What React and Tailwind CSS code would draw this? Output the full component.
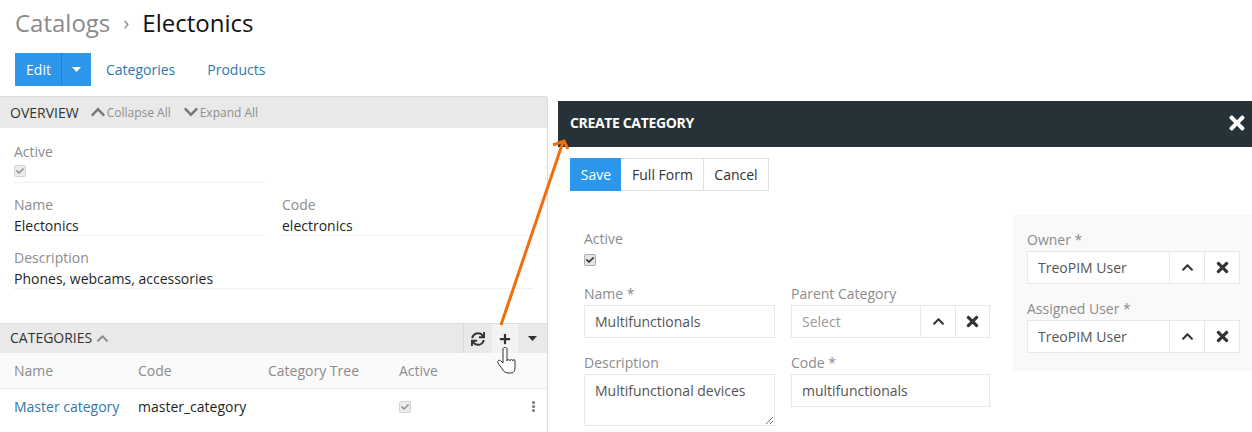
import React from 'react';
import { FaCheck, FaChevronUp, FaChevronDown, FaTimes, FaSync, FaPlus } from 'react-icons/fa';

const Caret = ({ className }) => (
    <svg width="9" height="5" viewBox="0 0 9 5" className={className}><path d="M0 0h9L4.5 5z" fill="currentColor" /></svg>
);

const ReadBox = ({ dark }) => (
    <span className={`flex h-[12px] w-[12px] items-center justify-center rounded-[2px] border ${dark ? 'border-[#aaa] bg-[#e4e4e4] text-[#222]' : 'border-[#d4d4d4] bg-[#ececec] text-[#8f8f8f]'}`}>
        <FaCheck size={8} />
    </span>
);

const Detail = ({ label, value, width }) => (
    <div className={width}>
        <div className="h-[21px] text-[14px] leading-[21px] text-[#8c8c8c]">{label}</div>
        <div className="h-[21px] border-b border-[#f0f0f0] text-[14px] leading-[21px] text-[#1f1f1f]">{value}</div>
    </div>
);

const Field = ({ label, children, width }) => (
    <div className={width}>
        <div className="h-[22px] text-[14px] leading-[21px] text-[#8c8c8c]">{label}</div>
        {children}
    </div>
);

const Input = ({ value }) => (
    <div className="h-[33px] border border-[#e8e8e8] bg-white px-[10px] text-[14px] leading-[31px] text-[#555]">{value}</div>
);

const LinkInput = ({ value, muted, inputWidth }) => (
    <div className="flex h-[33px] border border-[#e8e8e8] bg-white text-[#333]">
        <div className={`${inputWidth} px-[10px] text-[14px] leading-[31px] ${muted ? 'text-[#999]' : 'text-[#555]'}`}>{value}</div>
        <div className="flex w-[35px] items-center justify-center border-l border-[#e8e8e8]"><FaChevronUp size={13} /></div>
        <div className="flex flex-1 items-center justify-center border-l border-[#e8e8e8]"><FaTimes size={17} /></div>
    </div>
);

const App = () => {
    return (
        <div className="relative flex h-[432px] w-[1252px] overflow-hidden bg-white font-['Open_Sans',sans-serif]">
            <div className="w-[548px] shrink-0">
                <div className="flex h-[46px] items-center pl-[15px] text-[24px] leading-[46px]">
                    <span className="text-[#8a8a8a]">Catalogs</span>
                    <span className="ml-[13px] mr-[13px] text-[20px] text-[#8a8a8a]">›</span>
                    <span className="text-[#111]">Electonics</span>
                </div>
                <div className="mt-[7px] flex h-[33px] items-center pl-[15px] text-[14px]">
                    <div className="flex h-[33px] w-[46px] items-center justify-center bg-[#2b96ea] pl-[1px] text-white">Edit</div>
                    <div className="flex h-[33px] w-[30px] items-center justify-center border-l border-[#2280c9] bg-[#2b96ea] text-white"><Caret /></div>
                    <span className="ml-[15px] text-[#2f78ae]">Categories</span>
                    <span className="ml-[32px] text-[#2f78ae]">Products</span>
                </div>
                <div className="mt-[10px] h-[336px] rounded-tr-[3px] border-t border-r border-[#dcdcdc]">
                    <div className="flex h-[31px] items-center bg-[#e9e9e9] pl-[10px] text-[14px] text-[#333]">
                        <span>OVERVIEW</span>
                        <span className="ml-[11px] flex items-center text-[12px] text-[#8f8f8f]">
                            <FaChevronUp size={16} className="mr-[1px] -translate-y-[1px] text-[#777]" />Collapse All
                        </span>
                        <span className="ml-[12px] flex items-center text-[12px] text-[#8f8f8f]">
                            <FaChevronDown size={16} className="mr-[1px] -translate-y-[1px] text-[#777]" />Expand All
                        </span>
                    </div>
                    <div className="h-[195px] px-[14px] pt-[13px]">
                        <div className="h-[42px] w-[251px] border-b border-[#f0f0f0]">
                            <div className="h-[21px] text-[14px] leading-[21px] text-[#8c8c8c]">Active</div>
                            <div className="mt-[3px]"><ReadBox /></div>
                        </div>
                        <div className="mt-[11px] flex gap-[17px]">
                            <Detail label="Name" value="Electonics" width="w-[251px]" />
                            <Detail label="Code" value="electronics" width="w-[251px]" />
                        </div>
                        <div className="mt-[11px]">
                            <Detail label="Description" value="Phones, webcams, accessories" />
                        </div>
                    </div>
                    <div className="flex h-[30px] items-center border-t border-[#dcdcdc] bg-[#e9e9e9] pl-[10px] text-[14px] text-[#333]">
                        <span className="-translate-y-[1px]">CATEGORIES</span>
                        <FaChevronUp size={13} className="ml-[4px] text-[#8f8f8f]" />
                        <div className="ml-auto flex h-full">
                            <div className="flex w-[29px] items-center justify-center border-l border-[#d8d8d8] text-[#333]"><FaSync size={14} /></div>
                            <div className="flex w-[26px] items-center justify-center bg-[#f3f3f3] text-[#333]"><FaPlus size={12} /></div>
                            <div className="flex w-[29px] items-center justify-center text-[#333]"><Caret /></div>
                        </div>
                    </div>
                    <div className="flex h-[36px] items-center border-b border-[#e8e8e8] bg-[#fafafa] text-[14px] text-[#8c8c8c]">
                        <span className="w-[138px] pl-[14px]">Name</span>
                        <span className="w-[130px]">Code</span>
                        <span className="w-[131px]">Category Tree</span>
                        <span>Active</span>
                    </div>
                    <div className="flex h-[35px] items-center text-[14px]">
                        <span className="w-[138px] pl-[14px] text-[#2f78ae]">Master category</span>
                        <span className="w-[261px] text-[#1f1f1f]">master_category</span>
                        <ReadBox />
                        {/* row menu dots */}
                        <span className="ml-[121px] flex w-[3px] flex-col gap-[1px]">
                            <span className="h-[3px] w-[3px] rounded-full bg-[#777]" />
                            <span className="h-[3px] w-[3px] rounded-full bg-[#777]" />
                            <span className="h-[3px] w-[3px] rounded-full bg-[#777]" />
                        </span>
                    </div>
                </div>
            </div>

            <div className="ml-[10px] flex-1 pt-[101px]">
                <div className="flex h-[46px] items-center justify-between bg-[#263238] pl-[12px] pr-[4px] text-white">
                    <span className="-translate-y-[2px] text-[14px] font-bold tracking-[-0.35px]">CREATE CATEGORY</span>
                    <FaTimes size={22} className="-translate-y-[1px]" />
                </div>
                <div className="ml-[12px] mt-[11px] flex h-[33px] text-[14px]">
                    <div className="flex w-[51px] items-center justify-center bg-[#2b96ea] pl-[1px] text-white">Save</div>
                    <div className="flex w-[83px] items-center justify-center border-y border-r border-[#e0e0e0] pl-[1px] text-[#333]">Full Form</div>
                    <div className="flex w-[65px] items-center justify-center border-y border-r border-[#e0e0e0] text-[#333]">Cancel</div>
                </div>
                <div className="mt-[24px] flex">
                    <div className="ml-[26px] w-[406px] pt-[13px]">
                        <div className="h-[21px] text-[14px] leading-[21px] text-[#8c8c8c]">Active</div>
                        <div className="mt-[5px] h-[29px]"><ReadBox dark /></div>
                        <div className="flex gap-[16px]">
                            <Field label="Name *" width="w-[191px]"><Input value="Multifunctionals" /></Field>
                            <Field label="Parent Category" width="w-[199px]"><LinkInput value="Select" muted inputWidth="w-[128px]" /></Field>
                        </div>
                        <div className="mt-[14px] flex gap-[16px]">
                            <Field label="Description" width="w-[191px]">
                                <div className="relative h-[52px] border border-[#e8e8e8] bg-white px-[10px] pt-[5px] text-[14px] leading-[21px] text-[#555]">
                                    Multifunctional devices
                                    <svg width="8" height="8" viewBox="0 0 8 8" className="absolute bottom-[1px] right-[1px] text-[#777]"><path d="M1 8 8 1M5 8l3-3" stroke="currentColor" /></svg>
                                </div>
                            </Field>
                            <Field label="Code *" width="w-[199px]"><Input value="multifunctionals" /></Field>
                        </div>
                    </div>
                    <div className="ml-[23px] h-[156px] flex-1 bg-[#f9f9f9] pl-[14px] pr-[12px] pt-[14px]">
                        <Field label="Owner *"><LinkInput value="TreoPIM User" inputWidth="w-[141px]" /></Field>
                        <div className="mt-[14px]">
                            <Field label="Assigned User *"><LinkInput value="TreoPIM User" inputWidth="w-[141px]" /></Field>
                        </div>
                    </div>
                </div>
            </div>

            {/* annotation arrow and mouse pointer */}
            <svg width="1252" height="432" viewBox="0 0 1252 432" className="pointer-events-none absolute left-0 top-0">
                <path d="M501 325 563 142" stroke="#f26d0c" strokeWidth="3" fill="none" />
                <path d="M553 145 564 141 568 149" stroke="#f26d0c" strokeWidth="3" fill="none" />
                <path d="M503 349v14l-2-2c-2-2-4 0-3 2l5 7c1 2 3 3 6 3h2c3 0 4-3 4-5v-7c0-2-2-2-2 0 0-2-3-2-3 0 0-2-3-2-3 0v-12c0-2-4-2-4 0z" fill="#fff" stroke="#333" strokeWidth="1" />
            </svg>
        </div>
    );
};

export default App;
